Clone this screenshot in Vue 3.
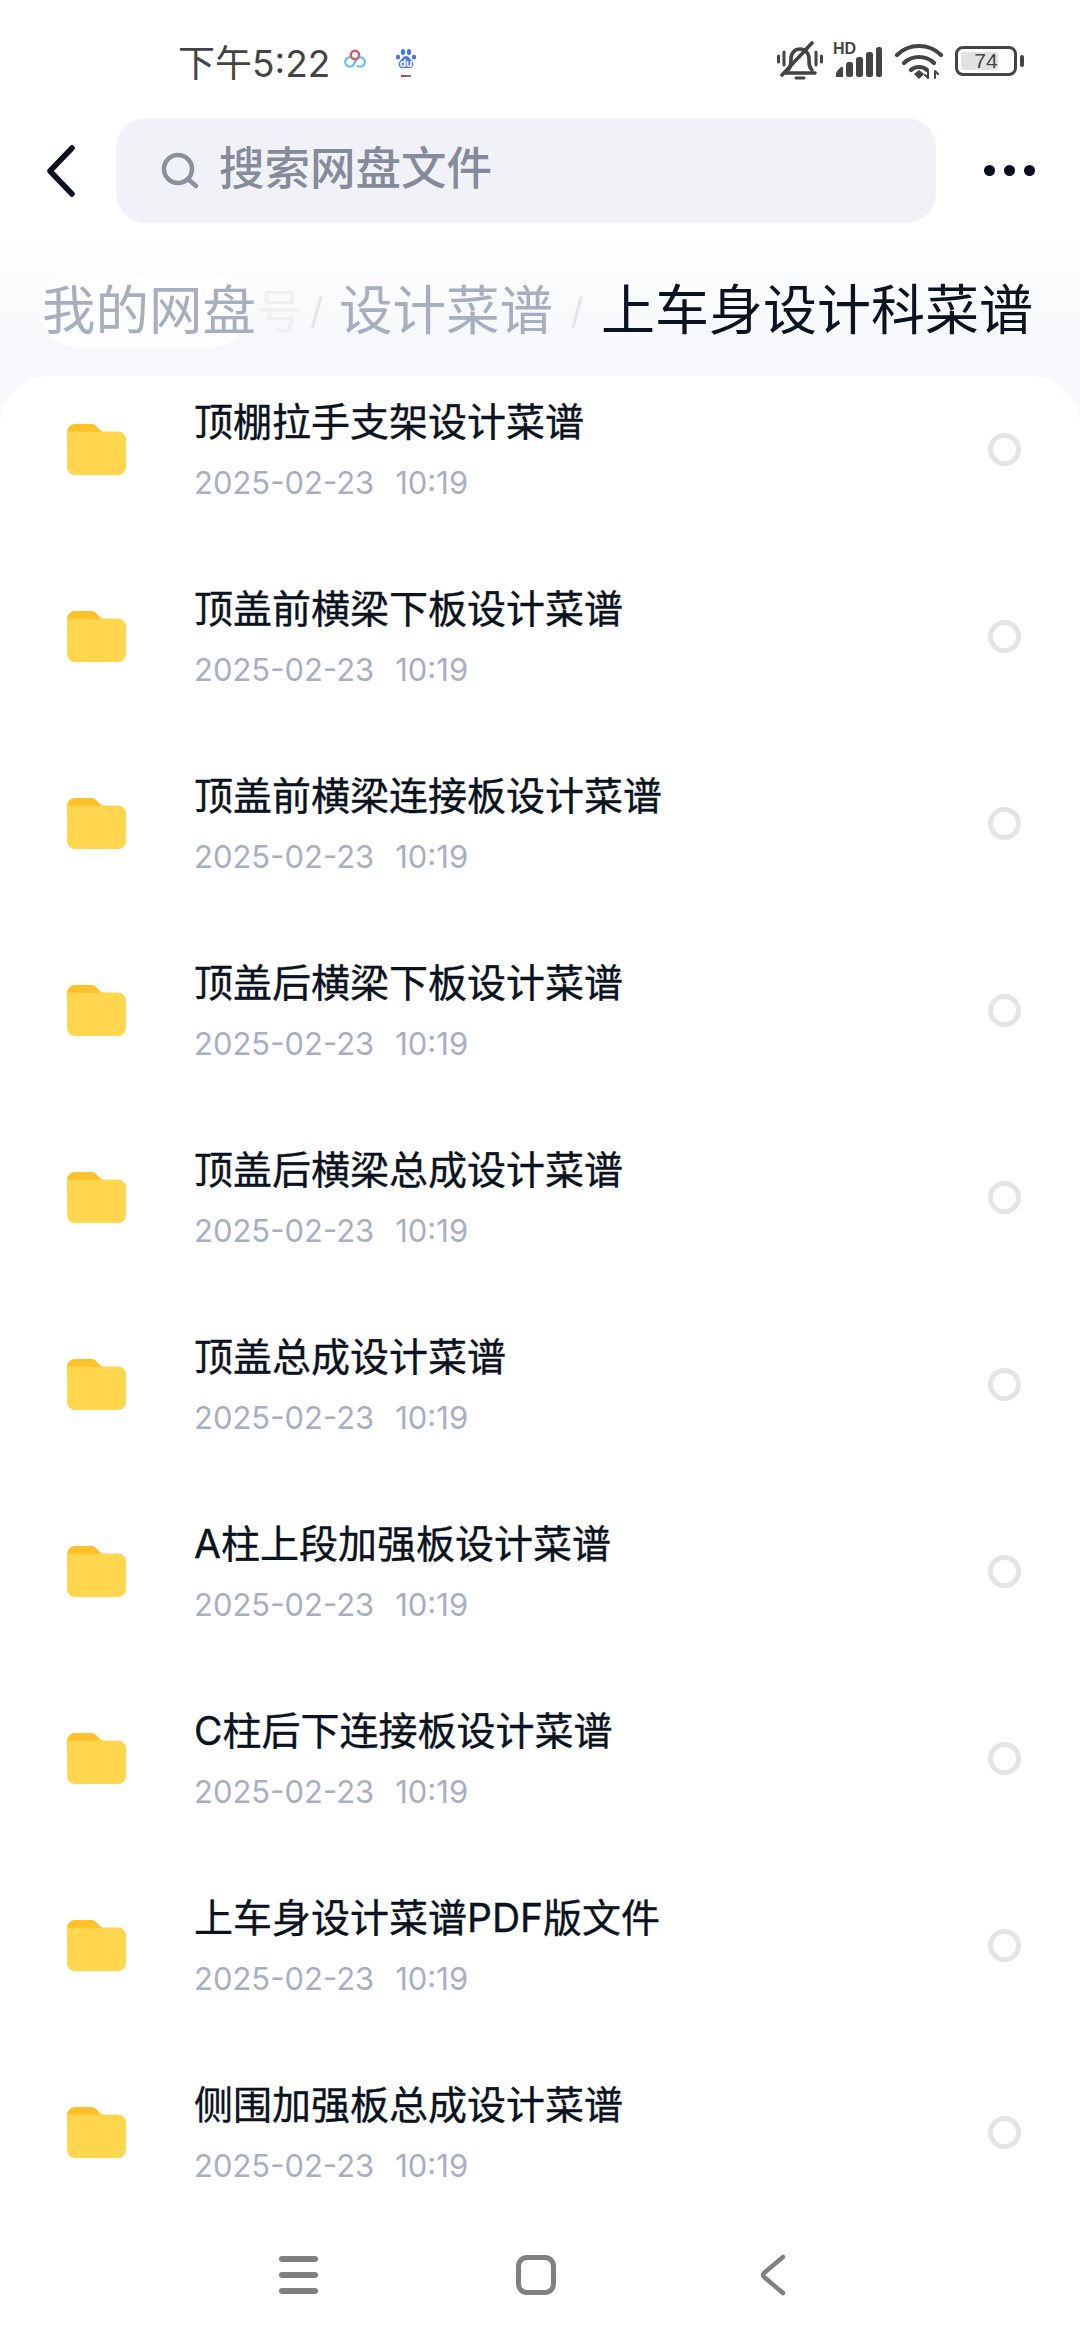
<template>
  <div class="page">
    <header class="top">
      <div class="status-bar">
        <span class="time">下午5:22</span>
        <svg class="app-icon cloud" width="24" height="20" viewBox="0 0 24 20" fill="none">
          <path d="M10 9.500a4.700 4.700 0 1 0 0 7l4-7a4.700 4.700 0 1 1 0 7" stroke="#62bdf0" stroke-width="2.200" />
          <circle cx="12" cy="6" r="4.200" stroke="#d9586f" stroke-width="2.400" />
        </svg>
        <svg class="app-icon paw" width="22" height="32" viewBox="0 0 22 32">
          <g fill="#4a77e0">
            <ellipse cx="3" cy="10" rx="2.200" ry="2.600" />
            <ellipse cx="8" cy="5" rx="2.200" ry="3" />
            <ellipse cx="14" cy="5" rx="2.200" ry="3" />
            <ellipse cx="19" cy="10" rx="2.200" ry="2.600" />
            <path d="M11 9c3 0 4 3 6 5 2 2 2 7-2 7H7c-4 0-4-5-2-7 2-2 3-5 6-5z" />
          </g>
          <text x="11" y="20" text-anchor="middle" class="du">du</text>
          <rect x="6" y="28" width="5" height="2" fill="#b9414f" />
          <rect x="11" y="28" width="5" height="2" fill="#4a77e0" />
        </svg>
        <div class="status-right">
          <svg width="46" height="40" viewBox="0 0 46 40" fill="none" stroke="#444" stroke-linecap="round">
            <path d="M11 29c3-3 3-6 3-11 0-6 4-10 9-10s9 4 9 10c0 5 0 8 3 11" stroke-width="3.600" />
            <path d="M8 32h30" stroke-width="3.600" />
            <path d="M5 34 35 2" stroke-width="3.600" />
            <path d="M19 37h8" stroke-width="3" />
            <path d="M1.500 15v6M7 11v13M39 11v13M44.500 15v6" stroke-width="3" />
          </svg>
          <div class="signal">
            <span class="hd">HD</span>
            <svg width="48" height="32" viewBox="0 0 48 32" fill="#444">
              <path d="M1 31v-3q0-2 2-4l3-3q2-1 2 1v9z" />
              <rect x="11" y="16" width="7" height="15" rx="2.500" />
              <rect x="21" y="11" width="7" height="20" rx="2.500" />
              <rect x="31" y="6" width="7" height="25" rx="2.500" />
              <rect x="41" y="1" width="6" height="30" rx="2.500" />
            </svg>
          </div>
          <svg width="48" height="38" viewBox="0 0 48 38" fill="none" stroke="#444" stroke-width="4.200" stroke-linecap="round">
            <path d="M2 13C14 1 34 1 46 13" />
            <path d="M9 21c8-8 22-8 30 0" />
            <path d="M16 28c4-4 12-4 16 0" />
            <path d="m20 32 4 4 4-4-4-3z" fill="#444" stroke-width="1.500" />
            <path d="M33 36v-6m-3 3 3 3M40 36v-7m3 3-3-3" stroke-width="2" />
          </svg>
          <div class="battery">
            <div class="battery-body">
              <div class="battery-fill"></div>
              <span class="battery-num">74</span>
            </div>
            <div class="battery-nib"></div>
          </div>
        </div>
      </div>

      <div class="toolbar">
        <svg class="back" width="30" height="52" viewBox="0 0 30 52" fill="none" stroke="#0b0f1e" stroke-width="5.500" stroke-linecap="round" stroke-linejoin="round">
          <path d="M26 3 4 26l22 23" />
        </svg>
        <div class="search">
          <svg width="40" height="40" viewBox="0 0 40 40" fill="none" stroke="#8a909e" stroke-width="4.500" stroke-linecap="round">
            <circle cx="18" cy="18" r="14" />
            <path d="m29 29 7 6" />
          </svg>
          <span class="placeholder">搜索网盘文件</span>
        </div>
        <div class="more">
          <i></i><i></i><i></i>
        </div>
      </div>

      <nav class="crumbs">
        <span class="crumb first"><b class="crumb-text">我的网盘</b><em class="ghost">号</em></span>
        <span class="sep sep-first">/</span>
        <span class="crumb">设计菜谱</span>
        <span class="sep sep-second">/</span>
        <span class="crumb current">上车身设计科菜谱</span>
      </nav>
    </header>

    <section class="card">
      <div class="list">
        <div v-for="item in files" :key="item" class="row">
          <svg class="folder" width="59" height="51" viewBox="0 0 60 52">
            <path d="M0 8a8 8 0 0 1 8-8h17c6 0 7 8 13 8h14a8 8 0 0 1 8 8v4H0z" fill="#ffc129" />
            <path d="M0 8h38 14a8 8 0 0 1 8 8v28a8 8 0 0 1-8 8H8a8 8 0 0 1-8-8z" fill="#ffd64d" />
          </svg>
          <div class="info">
            <div class="name">{{ item }}</div>
            <div class="date"><span>2025-02-23</span><span>10:19</span></div>
          </div>
          <span class="radio"></span>
        </div>
      </div>
    </section>

    <footer class="nav-bar">
      <div class="nav-menu"><i></i><i></i><i></i></div>
      <div class="nav-home"></div>
      <svg width="26" height="42" viewBox="0 0 26 42" fill="none" stroke="#808080" stroke-width="4.500" stroke-linecap="round" stroke-linejoin="round">
        <path d="M23 3 4 19q-2 2 0 4l19 16" />
      </svg>
    </footer>
  </div>
</template>

<script setup>
const files = [
  "顶棚拉手支架设计菜谱",
  "顶盖前横梁下板设计菜谱",
  "顶盖前横梁连接板设计菜谱",
  "顶盖后横梁下板设计菜谱",
  "顶盖后横梁总成设计菜谱",
  "顶盖总成设计菜谱",
  "A柱上段加强板设计菜谱",
  "C柱后下连接板设计菜谱",
  "上车身设计菜谱PDF版文件",
  "侧围加强板总成设计菜谱",
];
</script>

<style>
html,
body {
  background: #fff;
}
</style>

<style scoped>
.page {
  width: 1080px;
  height: 2340px;
  overflow: hidden;
  font-family: Inter, "Noto Sans CJK SC", sans-serif;
  background: linear-gradient(#fff 0, #fff 232px, #f6f8fb 345px);
  display: flex;
  flex-direction: column;
}

.top {
  height: 376px;
}

.status-bar {
  height: 118px;
  display: flex;
  align-items: center;
  padding: 0 56px 0 178px;
  box-sizing: border-box;
  color: #444;
}

.time {
  font-size: 37px;
  width: 162px;
  margin-top: 3px;
  white-space: nowrap;
}

.app-icon.cloud {
  margin-left: 3px;
}

.app-icon.paw {
  margin-left: 28px;
  margin-top: 8px;
}

.du {
  font-size: 10px;
  font-weight: 700;
  fill: #fff;
}

.status-right {
  margin-left: auto;
  display: flex;
  align-items: center;
  gap: 12px;
  margin-top: 4px;
}

.signal {
  position: relative;
  width: 48px;
  height: 32px;
  margin-top: 2px;
}

.hd {
  position: absolute;
  left: -2px;
  top: -5px;
  font-size: 16px;
  font-weight: 700;
  line-height: 16px;
  color: #444;
  font-family: "Liberation Sans", sans-serif;
}

.battery {
  display: flex;
  align-items: center;
  gap: 3px;
}

.battery-body {
  width: 62px;
  height: 30px;
  box-sizing: border-box;
  border: 3px solid #444;
  border-radius: 8px;
  position: relative;
  padding: 3px;
}

.battery-fill {
  width: 74%;
  height: 100%;
  background: #e2e2e2;
  border-radius: 2px;
}

.battery-num {
  position: absolute;
  left: 0;
  right: 0;
  top: 0;
  text-align: center;
  font-size: 21px;
  line-height: 24px;
  color: #444;
  font-family: "Liberation Sans", sans-serif;
}

.battery-nib {
  width: 4px;
  height: 12px;
  background: #444;
  border-radius: 2px;
}

.toolbar {
  height: 105px;
  display: flex;
  align-items: center;
  padding-left: 46px;
}

.back {
  flex: none;
}

.search {
  width: 820px;
  height: 105px;
  margin-left: 40px;
  border-radius: 30px;
  background: #f0f2f7;
  display: flex;
  align-items: center;
  padding-left: 44px;
  box-sizing: border-box;
  gap: 19px;
}

.placeholder {
  font-size: 45.500px;
  line-height: 60px;
  margin-top: -3px;
  color: #858b9b;
  font-weight: 500;
}

.more {
  display: flex;
  gap: 9px;
  margin-left: 48px;
}

.more i {
  width: 11px;
  height: 11px;
  border-radius: 50%;
  background: #050a1f;
}

.crumbs {
  display: flex;
  align-items: center;
  padding-left: 42px;
  margin-top: 50px;
  height: 76px;
  white-space: nowrap;
}

.crumb {
  font-size: 53.500px;
  line-height: 76px;
  color: #a6aec0;
}

.crumb.first {
  position: relative;
  width: 212px;
  flex: none;
}

.crumb.first::before {
  content: "";
  position: absolute;
  left: 2px;
  top: 2px;
  width: 200px;
  height: 72px;
  border-radius: 30px;
  background: #fff;
}

.crumb-text {
  position: relative;
  font-weight: 400;
}

.ghost {
  position: absolute;
  left: 214px;
  top: 0;
  font-style: normal;
  font-size: 46px;
  color: #eef0f3;
}

.crumb.current {
  font-size: 54px;
  color: #0b1220;
}

.sep {
  font-size: 36px;
  color: #e3e5ea;
  flex: none;
  text-align: center;
}

.sep-first {
  width: 85px;
  padding-left: 40px;
  box-sizing: border-box;
}

.sep-second {
  width: 48px;
}

.card {
  flex: 1;
  background: #fff;
  border-radius: 50px 50px 0 0;
}

.list {
  margin-top: -20px;
}

.row {
  height: 187px;
  display: flex;
  align-items: center;
  padding-left: 67px;
}

.folder {
  flex: none;
}

.info {
  margin-left: 68px;
  flex: 1;
}

.name {
  font-size: 39px;
  line-height: 54px;
  color: #0b1220;
  -webkit-text-stroke: 0.35px #0b1220;
}

.date {
  display: flex;
  gap: 21px;
  font-size: 31px;
  line-height: 44px;
  margin-top: 12px;
  color: #a9afc2;
}

.radio {
  width: 33px;
  height: 33px;
  box-sizing: border-box;
  border: 5px solid #e4e4e4;
  border-radius: 50%;
  margin-right: 59px;
  flex: none;
}

.nav-bar {
  position: absolute;
  left: 0;
  top: 2253px;
  width: 1080px;
  height: 44px;
  display: flex;
  align-items: center;
  padding-left: 279px;
  box-sizing: border-box;
}

.nav-menu {
  width: 39px;
  display: flex;
  flex-direction: column;
  gap: 10px;
}

.nav-menu i {
  height: 6px;
  border-radius: 3px;
  background: #808080;
}

.nav-home {
  width: 40px;
  height: 40px;
  box-sizing: border-box;
  border: 5px solid #808080;
  border-radius: 11px;
  margin: 0 204px 0 198px;
}
</style>
